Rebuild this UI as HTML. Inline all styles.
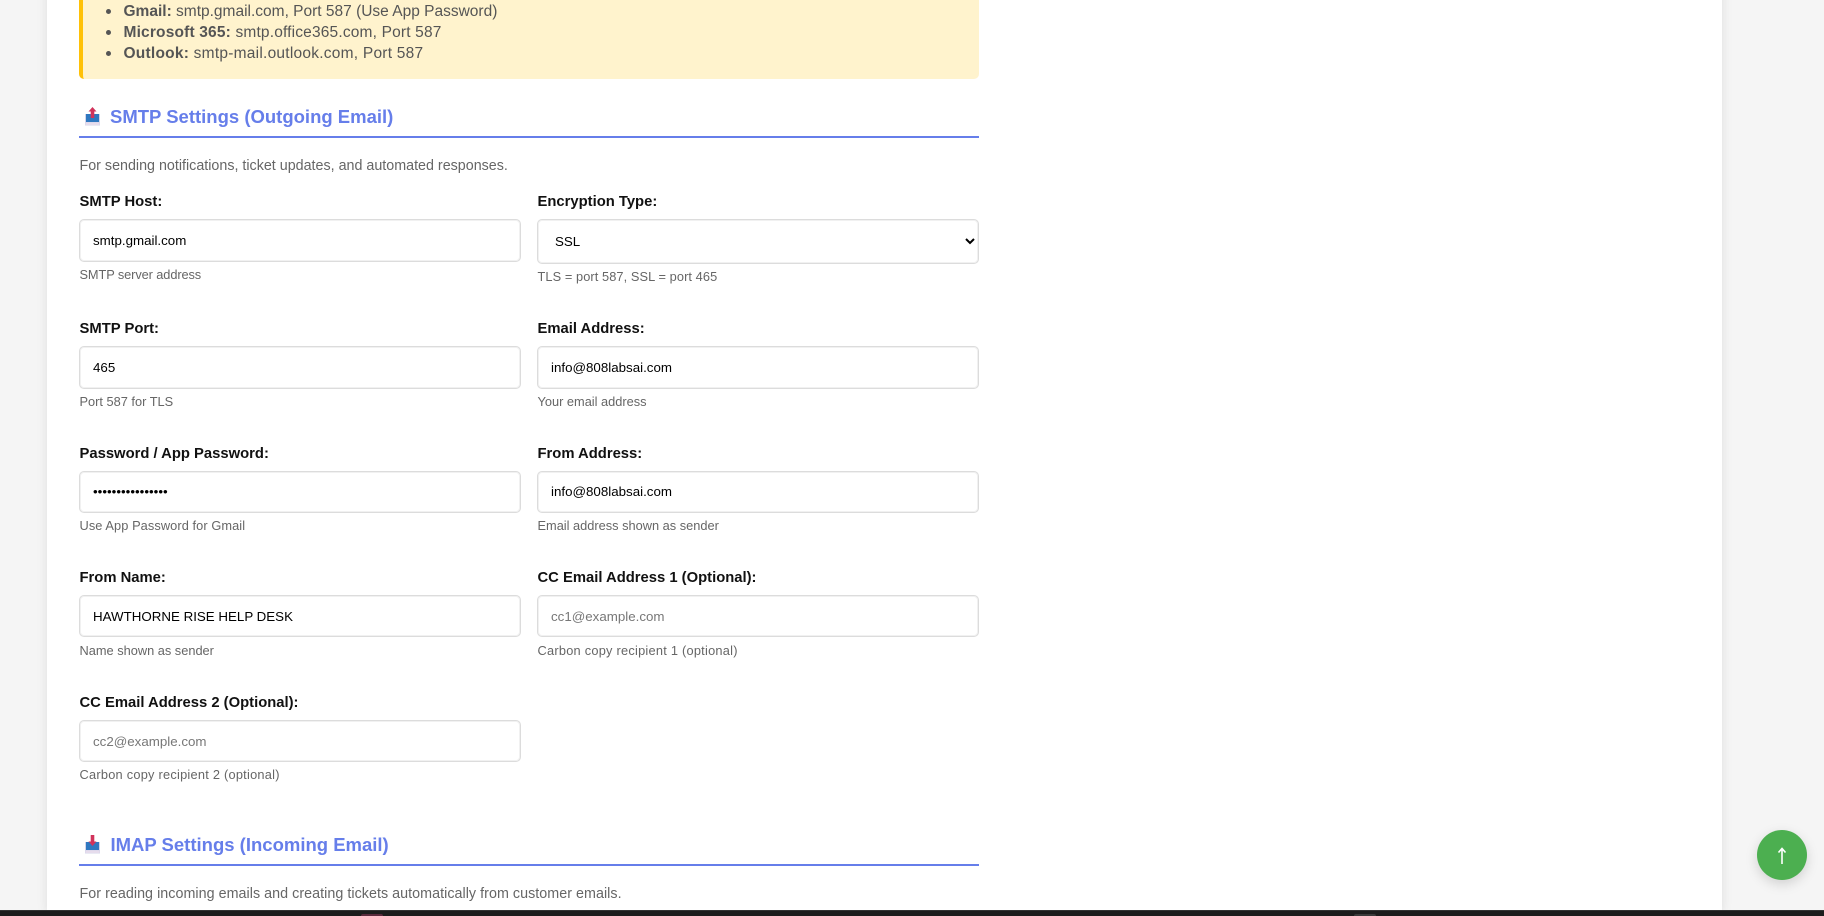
<!DOCTYPE html>
<html><head><meta charset="utf-8"><title>Email Settings</title>
<style>
html,body{margin:0;padding:0;width:1824px;height:916px;overflow:hidden;background:#f5f5f5;font-family:"Liberation Sans",sans-serif}
#root{position:absolute;left:0;top:0;width:1824px;height:916px;overflow:hidden;background:#f5f5f5}
#card{position:absolute;left:47px;top:-40px;width:1675px;height:950px;background:#fff;box-shadow:0 2px 10px rgba(0,0,0,.1)}
#note{position:absolute;left:79px;top:-20px;width:896px;height:99px;background:#fff3cd;border-left:4px solid #ffc107;border-radius:5px}
.t{position:absolute;white-space:nowrap;margin:0}
.li{color:#555;font-size:15.5px;line-height:21px;left:123.500px}
.li b{color:#555}
.dot{position:absolute;left:106px;width:5px;height:5px;border-radius:50%;background:#555}
.h{color:#667eea;font-weight:bold;font-size:18.5px;line-height:24px;left:110px}
.rule{position:absolute;left:79px;width:900px;height:2px;background:#667eea}
.d{color:#666;font-size:14.3px;line-height:18px;left:79.5px}
.l{color:#111;font-weight:bold;font-size:14.8px;line-height:18px}
.s{color:#666;font-size:12.8px;line-height:16px}
input,select{position:absolute;box-sizing:border-box;margin:0;background:#fff;border:1px solid #dcdcdc;box-shadow:inset 0 0 0 1px #f1f1f1;border-radius:5px;font-family:"Liberation Sans",sans-serif;font-size:13.33px;color:#000;padding:0 13px;outline:none}
input::placeholder{color:#777;opacity:1}
.a{left:79px;width:442px}.b{left:537px;width:442px}
.la{left:79.5px}.lb{left:537.5px}
#up{position:absolute;left:1757px;top:830px;width:50px;height:50px;border-radius:50%;background:#4caf50;box-shadow:0 4px 12px rgba(0,0,0,.15)}
#bar{position:absolute;left:0;top:910px;width:1824px;height:6px;background:#1c1c1c;border-top:1px solid #333;box-sizing:border-box}
</style></head><body>
<div id="root">
<div id="card"></div>
<div id="note"></div>
<span class="dot" style="top:9px"></span><span class="dot" style="top:30px"></span><span class="dot" style="top:51px"></span>
<p class="t li" style="top:1px"><b>Gmail:</b> smtp.gmail.com, Port 587 (Use App Password)</p>
<p class="t li" style="top:22px;letter-spacing:.17px"><b>Microsoft 365:</b> smtp.office365.com, Port 587</p>
<p class="t li" style="top:43px;letter-spacing:.24px"><b>Outlook:</b> smtp-mail.outlook.com, Port 587</p>

<svg style="position:absolute;left:84px;top:107px" width="17" height="19" viewBox="0 0 17 19"><path d="M1 7h15v11.500H1z" fill="#d4d4ea"/><path d="M2 7h4.500l2 2 2-2H15v8H2z" fill="#2f78c0"/><path d="M1.500 15.500h14v2.500h-14z" fill="#e6dcec"/><path d="M8.500 0L12.500 4.500H10.300V11H6.700V4.500H4.500z" fill="#d1335b"/></svg>
<h2 class="t h" style="top:105px">SMTP Settings (Outgoing Email)</h2>
<div class="rule" style="top:136px"></div>
<p class="t d" style="top:157px">For sending notifications, ticket updates, and automated responses.</p>

<label class="t l la" style="top:193px">SMTP Host:</label>
<input class="a" style="top:219px;height:43px" value="smtp.gmail.com">
<p class="t s la" style="top:267px;letter-spacing:-.1px">SMTP server address</p>
<label class="t l lb" style="top:193px">Encryption Type:</label>
<select class="b" style="top:219px;height:45px"><option>SSL</option></select>
<p class="t s lb" style="top:269px;letter-spacing:.08px">TLS = port 587, SSL = port 465</p>

<label class="t l la" style="top:320px">SMTP Port:</label>
<input class="a" style="top:346px;height:43px" value="465">
<p class="t s la" style="top:394px">Port 587 for TLS</p>
<label class="t l lb" style="top:320px">Email Address:</label>
<input class="b" style="top:346px;height:43px" value="info@808labsai.com">
<p class="t s lb" style="top:394px">Your email address</p>

<label class="t l la" style="top:445px">Password / App Password:</label>
<input class="a" type="password" style="top:471px;height:42px;padding-bottom:2px" value="aaaaaaaaaaaaaaaa">
<p class="t s la" style="top:518px;letter-spacing:.08px">Use App Password for Gmail</p>
<label class="t l lb" style="top:445px">From Address:</label>
<input class="b" style="top:471px;height:42px;padding-bottom:2px" value="info@808labsai.com">
<p class="t s lb" style="top:518px">Email address shown as sender</p>

<label class="t l la" style="top:569px">From Name:</label>
<input class="a" style="top:595px;height:42px" value="HAWTHORNE RISE HELP DESK">
<p class="t s la" style="top:643px">Name shown as sender</p>
<label class="t l lb" style="top:569px">CC Email Address 1 (Optional):</label>
<input class="b" style="top:595px;height:42px" placeholder="cc1@example.com">
<p class="t s lb" style="top:643px;letter-spacing:.24px">Carbon copy recipient 1 (optional)</p>

<label class="t l la" style="top:694px">CC Email Address 2 (Optional):</label>
<input class="a" style="top:720px;height:42px" placeholder="cc2@example.com">
<p class="t s la" style="top:767px;letter-spacing:.24px">Carbon copy recipient 2 (optional)</p>

<svg style="position:absolute;left:84px;top:835px" width="17" height="19" viewBox="0 0 17 19"><path d="M1 7h15v11.500H1z" fill="#d4d4ea"/><path d="M2 7h4.500l2 2 2-2H15v8H2z" fill="#2f78c0"/><path d="M1.500 15.500h14v2.500h-14z" fill="#e6dcec"/><path d="M8.500 11L12.500 6.500H10.300V0H6.700V6.500H4.500z" fill="#d1335b"/></svg>
<h2 class="t h" style="top:833px;left:110.500px">IMAP Settings (Incoming Email)</h2>
<div class="rule" style="top:864px"></div>
<p class="t d" style="top:885px;letter-spacing:.04px">For reading incoming emails and creating tickets automatically from customer emails.</p>

<div id="up"><svg style="position:absolute;left:15px;top:15px" width="20" height="20" viewBox="0 0 20 20"><path d="M10 19V4.500M6.500 7.500L10 3.500l3.500 4" fill="none" stroke="#fff" stroke-width="1.600"/></svg></div>
<div id="bar"><div style="position:absolute;left:361px;top:3px;width:22px;height:2px;background:#5a2a3c;border-radius:2px 2px 0 0"></div><div style="position:absolute;left:1354px;top:3px;width:22px;height:2px;background:#3a3a3a;border-radius:2px 2px 0 0"></div></div>
</div>
</body></html>
